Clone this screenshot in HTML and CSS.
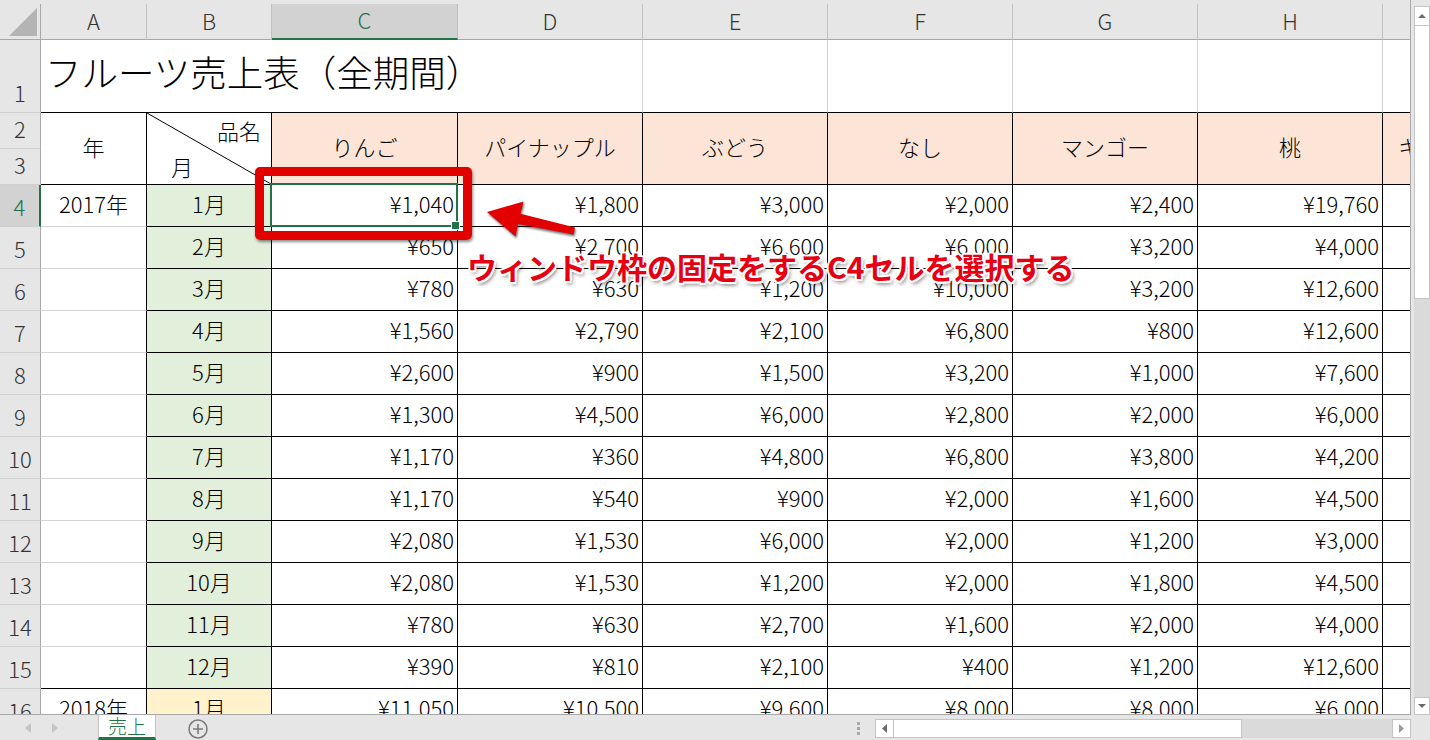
FILE: index.html
```html
<!DOCTYPE html>
<html lang="ja">
<head>
<meta charset="utf-8">
<title>フルーツ売上表</title>
<link rel="stylesheet" href="styles.css">
</head>
<body>
<div class="app">
  <div class="main">
    <div class="sheet">
      <div class="corner"><svg width="28" height="28" viewBox="0 0 28 28"><polygon points="28,0 28,28 0,28" fill="#b4b4b4"/></svg></div>
      <div class="ch">A</div>
      <div class="ch">B</div>
      <div class="ch on">C</div>
      <div class="ch">D</div>
      <div class="ch">E</div>
      <div class="ch">F</div>
      <div class="ch">G</div>
      <div class="ch">H</div>
      <div class="ch">I</div>

      <div class="rh">1</div>
      <div class="c title">フルーツ売上表（全期間）</div>
      <div class="c top"></div>
      <div class="c top"></div>
      <div class="c top"></div>
      <div class="c top"></div>
      <div class="c top"></div>

      <div class="rh">2</div>
      <div class="c a bb span2">年</div>
      <div class="c diag span2">
        <svg class="diagline" preserveAspectRatio="none"><line x1="0" y1="0" x2="100%" y2="100%" stroke="#000" stroke-width="1"/></svg>
        <span class="d1">品名</span>
        <span class="d2">月</span>
      </div>
      <div class="c fr span2">りんご</div>
      <div class="c fr span2">パイナップル</div>
      <div class="c fr span2">ぶどう</div>
      <div class="c fr span2">なし</div>
      <div class="c fr span2">マンゴー</div>
      <div class="c fr span2">桃</div>
      <div class="c fr span2">キウイフルーツ</div>
      <div class="rh">3</div>

      <div class="rh on">4</div>
      <div class="c a">2017年</div>
      <div class="c b">1月</div>
      <div class="c v sel">¥1,040</div>
      <div class="c v">¥1,800</div>
      <div class="c v">¥3,000</div>
      <div class="c v">¥2,000</div>
      <div class="c v">¥2,400</div>
      <div class="c v">¥19,760</div>
      <div class="c v"></div>

      <div class="rh">5</div>
      <div class="c a"></div>
      <div class="c b">2月</div>
      <div class="c v">¥650</div>
      <div class="c v">¥2,700</div>
      <div class="c v">¥6,600</div>
      <div class="c v">¥6,000</div>
      <div class="c v">¥3,200</div>
      <div class="c v">¥4,000</div>
      <div class="c v"></div>

      <div class="rh">6</div>
      <div class="c a"></div>
      <div class="c b">3月</div>
      <div class="c v">¥780</div>
      <div class="c v">¥630</div>
      <div class="c v">¥1,200</div>
      <div class="c v">¥10,000</div>
      <div class="c v">¥3,200</div>
      <div class="c v">¥12,600</div>
      <div class="c v"></div>

      <div class="rh">7</div>
      <div class="c a"></div>
      <div class="c b">4月</div>
      <div class="c v">¥1,560</div>
      <div class="c v">¥2,790</div>
      <div class="c v">¥2,100</div>
      <div class="c v">¥6,800</div>
      <div class="c v">¥800</div>
      <div class="c v">¥12,600</div>
      <div class="c v"></div>

      <div class="rh">8</div>
      <div class="c a"></div>
      <div class="c b">5月</div>
      <div class="c v">¥2,600</div>
      <div class="c v">¥900</div>
      <div class="c v">¥1,500</div>
      <div class="c v">¥3,200</div>
      <div class="c v">¥1,000</div>
      <div class="c v">¥7,600</div>
      <div class="c v"></div>

      <div class="rh">9</div>
      <div class="c a"></div>
      <div class="c b">6月</div>
      <div class="c v">¥1,300</div>
      <div class="c v">¥4,500</div>
      <div class="c v">¥6,000</div>
      <div class="c v">¥2,800</div>
      <div class="c v">¥2,000</div>
      <div class="c v">¥6,000</div>
      <div class="c v"></div>

      <div class="rh">10</div>
      <div class="c a"></div>
      <div class="c b">7月</div>
      <div class="c v">¥1,170</div>
      <div class="c v">¥360</div>
      <div class="c v">¥4,800</div>
      <div class="c v">¥6,800</div>
      <div class="c v">¥3,800</div>
      <div class="c v">¥4,200</div>
      <div class="c v"></div>

      <div class="rh">11</div>
      <div class="c a"></div>
      <div class="c b">8月</div>
      <div class="c v">¥1,170</div>
      <div class="c v">¥540</div>
      <div class="c v">¥900</div>
      <div class="c v">¥2,000</div>
      <div class="c v">¥1,600</div>
      <div class="c v">¥4,500</div>
      <div class="c v"></div>

      <div class="rh">12</div>
      <div class="c a"></div>
      <div class="c b">9月</div>
      <div class="c v">¥2,080</div>
      <div class="c v">¥1,530</div>
      <div class="c v">¥6,000</div>
      <div class="c v">¥2,000</div>
      <div class="c v">¥1,200</div>
      <div class="c v">¥3,000</div>
      <div class="c v"></div>

      <div class="rh">13</div>
      <div class="c a"></div>
      <div class="c b">10月</div>
      <div class="c v">¥2,080</div>
      <div class="c v">¥1,530</div>
      <div class="c v">¥1,200</div>
      <div class="c v">¥2,000</div>
      <div class="c v">¥1,800</div>
      <div class="c v">¥4,500</div>
      <div class="c v"></div>

      <div class="rh">14</div>
      <div class="c a"></div>
      <div class="c b">11月</div>
      <div class="c v">¥780</div>
      <div class="c v">¥630</div>
      <div class="c v">¥2,700</div>
      <div class="c v">¥1,600</div>
      <div class="c v">¥2,000</div>
      <div class="c v">¥4,000</div>
      <div class="c v"></div>

      <div class="rh">15</div>
      <div class="c a bb"></div>
      <div class="c b">12月</div>
      <div class="c v">¥390</div>
      <div class="c v">¥810</div>
      <div class="c v">¥2,100</div>
      <div class="c v">¥400</div>
      <div class="c v">¥1,200</div>
      <div class="c v">¥12,600</div>
      <div class="c v"></div>

      <div class="rh">16</div>
      <div class="c a bb">2018年</div>
      <div class="c b y">1月</div>
      <div class="c v">¥11,050</div>
      <div class="c v">¥10,500</div>
      <div class="c v">¥9,600</div>
      <div class="c v">¥8,000</div>
      <div class="c v">¥8,000</div>
      <div class="c v">¥6,000</div>
      <div class="c v"></div>
    </div>

    <div class="vs">
      <div class="sbtn"><svg width="8" height="4" viewBox="0 0 8 4"><polygon points="0,4 8,4 4,0" fill="#6b6b6b"/></svg></div>
      <div class="vthumb"></div>
      <div class="vtrack"></div>
      <div class="sbtn dn"><svg width="8" height="4" viewBox="0 0 8 4"><polygon points="0,0 8,0 4,4" fill="#6b6b6b"/></svg></div>
    </div>
  </div>

  <div class="bar">
    <div class="nav">
      <svg width="6" height="10" viewBox="0 0 6 10"><polygon points="6,0 6,10 0,5" fill="#c4c4c4"/></svg>
      <svg width="6" height="10" viewBox="0 0 6 10"><polygon points="0,0 0,10 6,5" fill="#c4c4c4"/></svg>
    </div>
    <div class="tab">売上</div>
    <div class="plus"><svg width="20" height="20" viewBox="0 0 20 20"><circle cx="10" cy="10" r="9" fill="none" stroke="#7a7a7a" stroke-width="1.5"/><path d="M10 5v10M5 10h10" stroke="#7a7a7a" stroke-width="1.6"/></svg></div>
    <div class="spacer"></div>
    <div class="dots"><i></i><i></i><i></i></div>
    <div class="hs">
      <div class="hbtn"><svg width="5" height="9" viewBox="0 0 5 9"><polygon points="5,0 5,9 0,4.5" fill="#6b6b6b"/></svg></div>
      <div class="hthumb"></div>
      <div class="htrack"></div>
      <div class="hbtn"><svg width="5" height="9" viewBox="0 0 5 9"><polygon points="0,0 0,9 5,4.5" fill="#9a9a9a"/></svg></div>
    </div>
  </div>

  <div class="redbox"></div>
  <svg class="arrow" width="100" height="48" viewBox="480 195 100 48">
    <polygon points="487,212 523.5,201.5 520.5,213.8 575,227.5 573.5,234.5 518,224 515.5,236.5" fill="#e30000"/>
  </svg>
  <div class="note">ウィンドウ枠の固定をするC4セルを選択する</div>
</div>
</body>
</html>
```

FILE: styles.css
```css
* {
  box-sizing: border-box;
  margin: 0;
  padding: 0;
}

body {
  width: 1430px;
  height: 740px;
  overflow: hidden;
  background: #e6e6e6;
  font-family: "Noto Sans CJK JP", "Noto Sans", sans-serif;
}

.app {
  position: relative;
  width: 1430px;
  height: 740px;
  display: flex;
  flex-direction: column;
}

.main {
  display: flex;
  height: 715px;
}

.sheet {
  width: 1411px;
  height: 715px;
  flex: none;
  overflow: hidden;
  display: grid;
  grid-template-columns: 41px 106px 125px 186px repeat(6, 185px);
  grid-template-rows: 40px 73px 36px 36px repeat(13, 42px);
  background: #e6e6e6;
  border-right: 1px solid #a8a8a8;
  border-bottom: 1px solid #a8a8a8;
}

/* headers */
.corner {
  align-self: end;
  height: 36px;
  padding: 4px 3px 3px 9px;
  background: #e6e6e6;
  border-right: 1px solid #a8a8a8;
  border-bottom: 1px solid #a8a8a8;
}

.corner svg {
  display: block;
}

.ch {
  align-self: end;
  height: 36px;
  display: flex;
  align-items: center;
  justify-content: center;
  padding-bottom: 4px;
  background: #e6e6e6;
  border-right: 1px solid #c0c0c0;
  border-bottom: 1px solid #a8a8a8;
  font-size: 22px;
  font-weight: 300;
  line-height: 30px;
  color: #333;
}

.ch.on {
  background: #d2d2d2;
  color: #217346;
  border-bottom: 2px solid #217346;
}

.rh {
  display: flex;
  align-items: flex-end;
  justify-content: center;
  padding-bottom: 5px;
  background: #e6e6e6;
  border-right: 1px solid #a8a8a8;
  border-bottom: 1px solid #d0d0d0;
  font-size: 22px;
  font-weight: 300;
  line-height: 30px;
  color: #333;
}

.rh.on {
  background: #d2d2d2;
  color: #217346;
  border-right: 2px solid #217346;
}

/* cells */
.c {
  display: flex;
  align-items: center;
  justify-content: center;
  padding: 0 4px 6px;
  background: #fff;
  border-right: 1px solid #d4d4d4;
  border-bottom: 1px solid #d4d4d4;
  font-size: 22px;
  font-weight: 300;
  line-height: 30px;
  color: #000;
  white-space: nowrap;
}

.span2 {
  grid-row: span 2;
}

.title {
  grid-column: span 4;
  justify-content: flex-start;
  padding: 0 0 8px 4px;
  font-size: 36.5px;
  line-height: 44px;
  border-bottom-color: #000;
}

.top {
  border-bottom-color: #000;
}

.a {
  border-right-color: #000;
}

.bb {
  border-bottom-color: #000;
}

.b {
  background: #e2efda;
  border-right-color: #000;
  border-bottom-color: #000;
}

.b.y {
  background: #fff2cc;
}

.fr {
  background: #fce4d6;
  border-right-color: #000;
  border-bottom-color: #000;
}

.v {
  justify-content: flex-end;
  padding-right: 3px;
  border-right-color: #000;
  border-bottom-color: #000;
}

.diag {
  position: relative;
  flex-direction: column;
  align-items: stretch;
  justify-content: space-between;
  padding: 2px 10px 3px 24px;
  border-right-color: #000;
  border-bottom-color: #000;
}

.diagline {
  position: absolute;
  left: 0;
  top: 0;
  width: 100%;
  height: 100%;
}

.d1 {
  text-align: right;
}

.d2 {
  text-align: left;
}

.sel {
  position: relative;
}

.sel::after {
  content: "";
  position: absolute;
  left: -2px;
  top: -2px;
  right: -1px;
  bottom: -1px;
  border: 2px solid #217346;
}

.sel::before {
  content: "";
  position: absolute;
  right: -3px;
  bottom: -4px;
  width: 7px;
  height: 7px;
  background: #217346;
  border: 1px solid #fff;
  z-index: 2;
}

/* vertical scrollbar */
.vs {
  width: 19px;
  flex: none;
  padding: 6px 0 0 3px;
  display: flex;
  flex-direction: column;
}

.sbtn {
  height: 20px;
  flex: none;
  display: flex;
  align-items: center;
  justify-content: center;
  background: #fff;
  border: 1px solid #c4c4c4;
}

.sbtn.dn {
  height: 18px;
}

.vthumb {
  height: 273px;
  flex: none;
  background: #fff;
  border: 1px solid #c4c4c4;
  border-top: none;
}

.vtrack {
  flex: 1;
  background: #dadada;
}

/* bottom bar */
.bar {
  height: 25px;
  display: flex;
  background: #e6e6e6;
}

.nav {
  width: 98px;
  flex: none;
  display: flex;
  align-items: center;
  gap: 21px;
  padding-left: 25px;
}

.nav svg,
.plus svg,
.hbtn svg,
.sbtn svg {
  display: block;
}

.tab {
  width: 58px;
  flex: none;
  display: flex;
  align-items: center;
  justify-content: center;
  background: #fff;
  border-left: 1px solid #c4c4c4;
  border-right: 1px solid #c4c4c4;
  border-bottom: 3px solid #217346;
  color: #217346;
  font-size: 19px;
  font-weight: 300;
  line-height: 22px;
}

.plus {
  margin-left: 32px;
  padding-top: 4px;
}

.spacer {
  flex: 1;
}

.dots {
  width: 3px;
  margin-right: 15px;
  display: flex;
  flex-direction: column;
  gap: 2px;
  padding-top: 7px;
}

.dots i {
  display: block;
  width: 3px;
  height: 3px;
  background: #a8a8a8;
}

.hs {
  width: 536px;
  height: 19px;
  margin-top: 4px;
  margin-right: 19px;
  display: flex;
}

.hbtn {
  width: 19px;
  flex: none;
  display: flex;
  align-items: center;
  justify-content: center;
  background: #fff;
  border: 1px solid #c4c4c4;
}

.hthumb {
  width: 348px;
  flex: none;
  background: #fff;
  border: 1px solid #c4c4c4;
  border-left: none;
}

.htrack {
  flex: 1;
  background: #dadada;
}

/* annotations */
.redbox {
  position: absolute;
  left: 255px;
  top: 167px;
  width: 217px;
  height: 73px;
  border: 9px solid #e30000;
  border-radius: 5px;
  box-shadow: 1px 2px 3px rgba(0, 0, 0, 0.45);
}

.arrow {
  position: absolute;
  left: 480px;
  top: 195px;
  filter: drop-shadow(1px 2px 1px rgba(0, 0, 0, 0.55));
}

.note {
  position: absolute;
  left: 467px;
  top: 251px;
  font-size: 30px;
  font-weight: 700;
  line-height: 30px;
  color: #e60012;
  white-space: nowrap;
  text-shadow:
    2px 0 #fff, -2px 0 #fff, 0 2px #fff, 0 -2px #fff,
    1.5px 1.5px #fff, -1.5px 1.5px #fff, 1.5px -1.5px #fff, -1.5px -1.5px #fff,
    2px 3px 4px rgba(0, 0, 0, 0.6);
}
```
